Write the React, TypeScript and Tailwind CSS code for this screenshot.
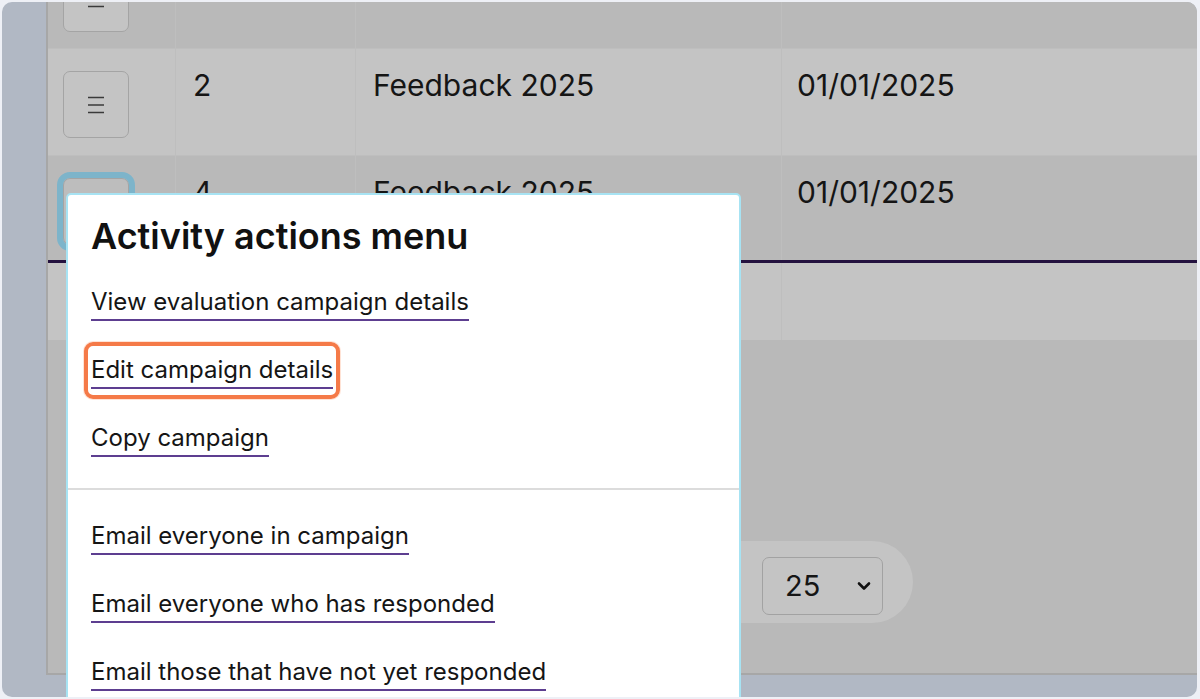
import React from "react";

const MenuIcon = () => (
	<svg width="18" height="18" viewBox="0 0 18 18" className="text-[#3a3a3a]">
		<path d="M1 1.5h16M1 9h16M1 16.5h16" stroke="currentColor" strokeWidth="1.6" />
	</svg>
);

const ActionButton = ({ focused = false }: { focused?: boolean }) => (
	<button
		className={
			focused
				? "w-[66px] h-[67px] rounded-[7px] border border-[#a4a4a4] bg-[#bdbdbd] flex items-center justify-center outline-[6px] outline-solid outline-[#7db4ca] outline-offset-0"
				: "w-[66px] h-[67px] rounded-[7px] border border-[#a4a4a4] bg-[#c4c4c4] flex items-center justify-center"
		}
	>
		<MenuIcon />
	</button>
);

const rows = [
	{ id: "2", name: "Feedback 2025", date: "01/01/2025", bg: "bg-[#c4c4c4]", h: "h-[107px]", focused: false },
	{ id: "4", name: "Feedback 2025", date: "01/01/2025", bg: "bg-[#b9b9b9]", h: "h-[105px]", focused: true },
];

const MenuLink = ({ label, active = false }: { label: string; active?: boolean }) => (
	<div className="relative self-start">
		<a className="inline-block text-[24px] leading-[30px] pb-[2px] border-b-2 border-[#5d3e90] text-[#151515]">
			{label}
		</a>
		{active && (
			<span className="absolute left-[-7px] right-[-7px] top-[-13px] bottom-[-10px] rounded-[9px] border-[4px] border-[#f57a48] shadow-[0_0_0_1px_#ffe3d6]" />
		)}
	</div>
);

export default function App() {
	return (
		<div className="w-[1200px] h-[699px] bg-[#eef0f6] p-[2px] pr-[3px] font-['Inter',sans-serif]">
			<div className="relative w-full h-full rounded-[10px] overflow-hidden bg-[#b1b8c4] flex">
				<div className="w-[44px] shrink-0" />

				<div className="flex-1 h-[673px] bg-[#b9b9b9] border-l-2 border-b-2 border-[#a7a7a7] rounded-tr-[10px] flex flex-col text-[#151515]">
					{/* first row, mostly scrolled out of view */}
					<div className="grid grid-cols-[128px_180px_426px_1fr] grid-rows-[46px] h-[46px] bg-[#b9b9b9] overflow-hidden">
						<div className="border-r border-[#bebebe] pl-[15px]">
							<div className="mt-[-37px]">
								<ActionButton />
							</div>
						</div>
						<div className="border-r border-[#bebebe]" />
						<div className="border-r border-[#bebebe]" />
						<div />
					</div>

					{rows.map((r) => (
						<div key={r.id} className={`grid grid-cols-[128px_180px_426px_1fr] ${r.h} ${r.bg} border-t border-[#bebebe]`}>
							<div className="border-r border-[#bebebe] pl-[15px] pt-[22px]">
								<ActionButton focused={r.focused} />
							</div>
							<div className="border-r border-[#bebebe] pl-[17px] pt-[15px] text-[30px] leading-[42px]">{r.id}</div>
							<div className="border-r border-[#bebebe] pl-[17px] pt-[15px] text-[30px] leading-[42px]">{r.name}</div>
							<div className="pl-[15px] pt-[15px] text-[30px] leading-[42px]">{r.date}</div>
						</div>
					))}

					<div className="grid grid-cols-[128px_180px_426px_1fr] h-[80px] bg-[#c4c4c4] border-t-[3px] border-[#24123f]">
						<div className="border-r border-[#bebebe]" />
						<div className="border-r border-[#bebebe]" />
						<div className="border-r border-[#bebebe]" />
						<div />
					</div>

					{/* pagination */}
					<div className="mt-[201px] ml-[24px] w-[841px] h-[82px] rounded-r-[41px] bg-[#c4c4c4] flex items-center justify-end pr-[30px]">
						<div className="mt-[8px] w-[121px] h-[58px] rounded-[7px] border border-[#a2a2a2] flex items-center justify-between pl-[22px] pr-[10px]">
							<span className="text-[29px] leading-[34px]">25</span>
							<svg width="16" height="16" viewBox="0 0 16 16">
								<path d="M3 5.5l5 5 5-5" fill="none" stroke="#111" strokeWidth="2.6" strokeLinecap="round" strokeLinejoin="round" />
							</svg>
						</div>
					</div>
				</div>

				{/* actions popover */}
				<div className="absolute left-[64px] top-[191px] w-[675px] h-[520px] bg-white border-2 border-[#a7e3f3] rounded-t-[5px] flex flex-col">
					<div className="flex flex-col px-[23px] pt-[21px]">
						<h2 className="text-[36px] leading-[40px] font-semibold text-[#111]">Activity actions menu</h2>
						<div className="flex flex-col gap-[34px] mt-[31px]">
							<MenuLink label="View evaluation campaign details" />
							<MenuLink label="Edit campaign details" active />
							<MenuLink label="Copy campaign" />
						</div>
					</div>
					<div className="mt-[31px] h-[2px] bg-[#dcdcdc]" />
					<div className="flex flex-col gap-[34px] px-[23px] pt-[31px]">
						<MenuLink label="Email everyone in campaign" />
						<MenuLink label="Email everyone who has responded" />
						<MenuLink label="Email those that have not yet responded" />
					</div>
				</div>
			</div>
		</div>
	);
}
